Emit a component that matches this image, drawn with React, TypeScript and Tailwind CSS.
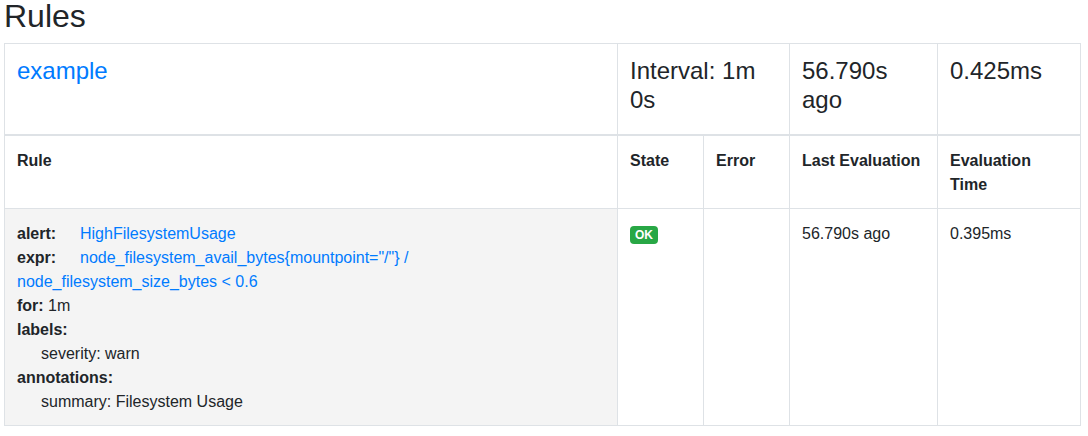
import React from "react";

const font = { fontFamily: '"Liberation Sans", "Helvetica Neue", Arial, sans-serif' };

type Rule = {
  alert: string;
  expr: string;
  duration: string;
  labels: Record<string, string>;
  annotations: Record<string, string>;
  state: string;
  lastEvaluation: string;
  evaluationTime: string;
};

const rule: Rule = {
  alert: "HighFilesystemUsage",
  expr: 'node_filesystem_avail_bytes{mountpoint="/"} / node_filesystem_size_bytes < 0.6',
  duration: "1m",
  labels: { severity: "warn" },
  annotations: { summary: "Filesystem Usage" },
  state: "OK",
  lastEvaluation: "56.790s ago",
  evaluationTime: "0.395ms",
};

const cell = "border border-[#dee2e6] px-3 pt-[13px] pb-[11px] align-top";

export default function App() {
  return (
    <div className="bg-white text-[#212529] text-base leading-6 px-1 min-h-[436px]" style={font}>
      <h2 className="text-[32px] leading-[38.4px] font-normal mt-[-3px] mb-2">Rules</h2>

      <table className="w-[1076px] table-fixed border-collapse border border-[#dee2e6]">
        <colgroup>
          <col className="w-[613px]" />
          <col className="w-[86px]" />
          <col className="w-[86px]" />
          <col className="w-[148px]" />
          <col className="w-[143px]" />
        </colgroup>
        <thead>
          <tr>
            <td className={`${cell} border-b-2`}>
              <h4 className="text-2xl leading-[28.8px] mb-2">
                <a href="#" className="text-[#007bff]">example</a>
              </h4>
            </td>
            <td colSpan={2} className={`${cell} border-b-2`}>
              <h4 className="text-2xl leading-[28.8px] mb-2">Interval: 1m 0s</h4>
            </td>
            <td className={`${cell} border-b-2`}>
              <h4 className="text-2xl leading-[28.8px] mb-2">56.790s ago</h4>
            </td>
            <td className={`${cell} border-b-2`}>
              <h4 className="text-2xl leading-[28.8px] mb-2">0.425ms</h4>
            </td>
          </tr>
        </thead>
        <tbody>
          <tr className="font-bold">
            <td className={cell}>Rule</td>
            <td className={cell}>State</td>
            <td className={cell}>Error</td>
            <td className={cell}>Last Evaluation</td>
            <td className={cell}>Evaluation Time</td>
          </tr>
          <tr>
            <td className={`${cell} bg-[#f4f4f4]`}>
              <div>
                <span className="inline-block w-[63px] font-bold">alert:</span>
                <a href="#" className="text-[#007bff]">{rule.alert}</a>
              </div>
              <div>
                <span className="inline-block w-[63px] font-bold">expr:</span>
                <a href="#" className="text-[#007bff]">{rule.expr}</a>
              </div>
              <div>
                <span className="font-bold">for:</span> {rule.duration}
              </div>
              <div className="font-bold">labels:</div>
              {Object.entries(rule.labels).map(([k, v]) => (
                <div key={k} className="pl-6">
                  {k}: {v}
                </div>
              ))}
              <div className="font-bold">annotations:</div>
              {Object.entries(rule.annotations).map(([k, v]) => (
                <div key={k} className="pl-6">
                  {k}: {v}
                </div>
              ))}
            </td>
            <td className={cell}>
              <span className="inline-block bg-[#28a745] text-white text-[12px] font-bold leading-[12px] px-[5px] py-[3px] rounded mt-[1px]">
                {rule.state}
              </span>
            </td>
            <td className={cell}></td>
            <td className={cell}>{rule.lastEvaluation}</td>
            <td className={cell}>{rule.evaluationTime}</td>
          </tr>
        </tbody>
      </table>
    </div>
  );
}
